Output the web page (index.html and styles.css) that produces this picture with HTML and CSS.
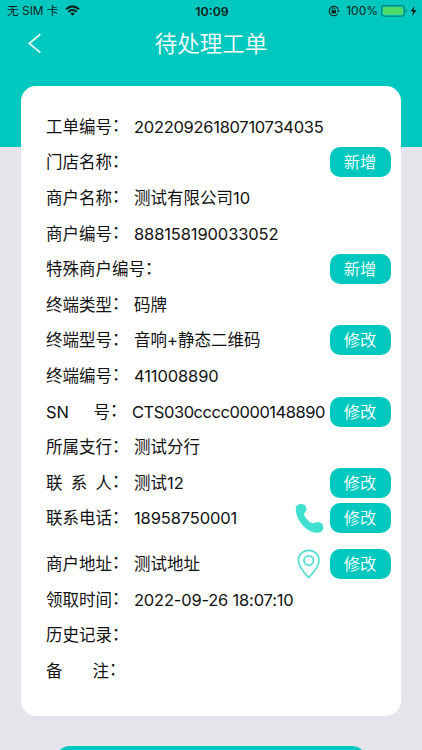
FILE: index.html
```html
<!DOCTYPE html>
<html lang="zh-CN">
<head>
  <meta charset="UTF-8">
  <meta name="viewport" content="width=device-width, initial-scale=1.0">
  <title>待处理工单</title>
  <link rel="stylesheet" href="styles.css">
</head>
<body>

  <!-- Header -->
  <header class="header">
    <div class="status-bar">
      <div class="status-left">
        <span class="carrier">无 SIM 卡</span>
        <svg class="wifi" width="15" height="11" viewBox="0 0 15 11">
          <path d="M1 4.2Q7.5-1.4 14 4.2" fill="none" stroke="#06241f" stroke-width="2"/>
          <path d="M3.3 6.7Q7.5 3.1 11.7 6.7" fill="none" stroke="#06241f" stroke-width="1.9"/>
          <path d="M5.2 8.4Q7.5 6.6 9.8 8.4L7.5 10.8Z" fill="#06241f"/>
        </svg>
      </div>
      <span class="clock">10:09</span>
      <div class="status-right">
        <svg class="lock" width="12" height="12" viewBox="0 0 12 12">
          <path d="M9.8 8.7A4.7 4.7 0 1 1 10.2 4.2" fill="none" stroke="#06241f" stroke-width="1.1"/>
          <path d="M8.8 5.3h3.1L10.4 7.6Z" fill="#06241f"/>
          <rect x="3.5" y="5.2" width="4.6" height="3.3" rx=".4" fill="#06241f"/>
          <path d="M4.4 5.3V4.2a1.4 1.4 0 0 1 2.8 0v1.1" fill="none" stroke="#06241f" stroke-width=".8"/>
        </svg>
        <span class="percent">100%</span>
        <svg class="battery" width="36" height="12" viewBox="0 0 36 12">
          <rect x=".6" y=".6" width="22.8" height="10.6" rx="2.6" fill="none" stroke="#06857b" stroke-width="1.1"/>
          <rect x="2" y="2" width="20" height="7.8" rx="1.4" fill="#4cd964"/>
          <path d="M24.6 4v3.8q1.4-.5 1.4-1.9t-1.4-1.9z" fill="#06857b"/>
          <path d="M33.4.9L29.6 6.5h2.5L31.2 11l4.4-6h-2.8z" fill="#06241f"/>
        </svg>
      </div>
    </div>
    <div class="nav-bar">
      <svg class="back" width="14" height="21" viewBox="0 0 14 21">
        <path d="M13.4 1.2L2.2 10.5L13.4 19.6" fill="none" stroke="#e9fffc" stroke-width="1.7"/>
      </svg>
      <h1 class="title">待处理工单</h1>
    </div>
  </header>

  <!-- Work order details -->
  <main class="card">
    <div class="row"><span class="label">工单编号</span><span class="colon">：</span><span class="value order-no">20220926180710734035</span></div>
    <div class="row"><span class="label">门店名称</span><span class="colon">：</span><span class="value"></span><button class="btn">新增</button></div>
    <div class="row"><span class="label">商户名称</span><span class="colon">：</span><span class="value">测试有限公司10</span></div>
    <div class="row"><span class="label">商户编号</span><span class="colon">：</span><span class="value number">888158190033052</span></div>
    <div class="row"><span class="label wide">特殊商户编号</span><span class="colon">：</span><span class="value"></span><button class="btn">新增</button></div>
    <div class="row"><span class="label">终端类型</span><span class="colon">：</span><span class="value">码牌</span></div>
    <div class="row"><span class="label">终端型号</span><span class="colon">：</span><span class="value">音响+静态二维码</span><button class="btn">修改</button></div>
    <div class="row"><span class="label">终端编号</span><span class="colon">：</span><span class="value number">411008890</span></div>
    <div class="row"><span class="label sn"><span>SN</span><span>号</span></span><span class="colon">：</span><span class="value serial">CTS030cccc0000148890</span><button class="btn">修改</button></div>
    <div class="row"><span class="label">所属支行</span><span class="colon">：</span><span class="value">测试分行</span></div>
    <div class="row"><span class="label"><span>联</span><span>系</span><span>人</span></span><span class="colon">：</span><span class="value">测试12</span><button class="btn">修改</button></div>
    <div class="row">
      <span class="label">联系电话</span><span class="colon">：</span><span class="value number">18958750001</span>
      <svg class="icon" width="30" height="30" viewBox="0 0 30 30">
        <path d="M1.7 6.2C1.5 2.9 4.1 1 7.1 1C10.7 1 12.7 3.5 12.5 6.2C12.3 8.6 10.4 9.5 10.1 11C9.7 13.6 15.8 19.8 18.5 20.2C20.1 20.4 21.5 18.8 24 18.9C27.1 19 29.3 21.1 29.3 24.3C29.3 27.7 27 29.8 23.2 29.8C13.2 29.8 2.3 18 1.7 6.2Z" fill="#40e0d0"/>
      </svg>
      <button class="btn">修改</button>
    </div>
    <div class="row address">
      <span class="label">商户地址</span><span class="colon">：</span><span class="value">测试地址</span>
      <svg class="icon" width="30" height="30" viewBox="0 0 30 30">
        <path d="M14.7 28.6Q4.4 18.2 4.4 11.3A10.3 10 0 0 1 25 11.3Q25 18.2 14.7 28.6Z" fill="none" stroke="#55dfd2" stroke-width="1.7" stroke-linejoin="round"/>
        <circle cx="14.7" cy="11.6" r="4.7" fill="none" stroke="#55dfd2" stroke-width="1.8"/>
      </svg>
      <button class="btn">修改</button>
    </div>
    <div class="row"><span class="label">领取时间</span><span class="colon">：</span><span class="value date">2022-09-26 18:07:10</span></div>
    <div class="row"><span class="label">历史记录</span><span class="colon">：</span><span class="value"></span></div>
    <div class="row"><span class="label remark"><span>备</span><span>注</span></span><span class="colon">：</span><span class="value"></span></div>
  </main>

  <!-- Bottom button, only its top edge is in view -->
  <div class="footer">
    <div class="submit"></div>
  </div>

</body>
</html>
```
FILE: styles.css
```css
* {
  box-sizing: border-box;
}

body {
  margin: 0;
  height: 750px;
  overflow: hidden;
  background: #e5e4ea;
  color: #111;
  font-family: Inter, "Noto Sans CJK SC", sans-serif;
}

.header {
  height: 147px;
  background: #00c8be;
}

.status-bar {
  display: grid;
  grid-template-columns: 1fr auto 1fr;
  align-items: center;
  height: 22px;
  padding: 0 5px 0 7px;
  font-size: 12px;
  color: #06241f;
}

.status-left,
.status-right {
  display: flex;
  align-items: center;
  height: 20px;
  line-height: 20px;
}

.status-right {
  justify-content: flex-end;
}

.carrier {
  height: 20px;
  margin-right: 6px;
  font-size: 11.8px;
}

.wifi {
  margin-bottom: 1px;
}

.clock {
  font-size: 12.4px;
  font-weight: 600;
}

.lock {
  margin-right: 6px;
}

.percent {
  margin-right: 3px;
}

.nav-bar {
  display: grid;
  grid-template-columns: 28px 1fr 28px;
  align-items: center;
  height: 42px;
  padding: 0 27px;
}

.title {
  margin: 0;
  padding-top: 1px;
  text-align: center;
  font-size: 22.5px;
  font-weight: 350;
  line-height: 42px;
  color: #fff;
}

.card {
  width: 380px;
  height: 630px;
  margin: -61px auto 0;
  padding: 23px 10px 0 25px;
  background: #fff;
  border-radius: 15px;
}

.row {
  display: flex;
  align-items: center;
  height: 35.6px;
  font-size: 16.5px;
  line-height: 24px;
  white-space: nowrap;
}

.address {
  height: 45.6px;
  padding-top: 10px;
}

.label {
  display: flex;
  justify-content: space-between;
  width: 66px;
}

.wide {
  width: 99px;
}

.sn {
  width: 64px;
}

.remark {
  width: 63px;
}

.colon {
  width: 22px;
  padding-bottom: 3px;
}

.value {
  flex: 1;
  min-width: 0;
}

.order-no {
  letter-spacing: -0.29px;
}

.number {
  letter-spacing: -0.12px;
}

.serial {
  letter-spacing: -0.45px;
}

.date {
  letter-spacing: -0.2px;
}

.icon {
  margin-right: 6px;
}

.btn {
  flex: none;
  width: 61px;
  height: 30px;
  padding: 0 1px 0 0;
  border: 0;
  border-radius: 10px;
  background: #00c8be;
  color: #fff;
  font: 350 16.3px/30px Inter, "Noto Sans CJK SC", sans-serif;
}

.footer {
  height: 34px;
  padding: 30px 55px 0;
  overflow: hidden;
}

.submit {
  height: 44px;
  border-radius: 15px;
  background: #00c8be;
}
```
